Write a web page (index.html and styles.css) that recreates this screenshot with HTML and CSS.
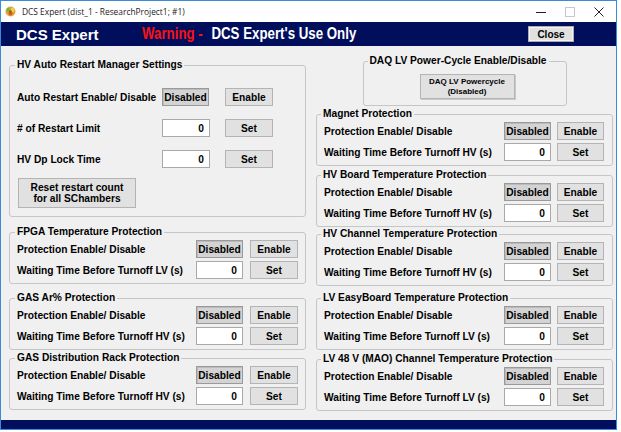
FILE: index.html
```html
<!DOCTYPE html>
<html>
<head>
<meta charset="utf-8">
<title>DCS Expert</title>
<link rel="stylesheet" href="styles.css">
</head>
<body>
<div class="window">
  <div class="titlebar">
    <svg class="app-icon" width="11" height="11" viewBox="0 0 11 11">
      <circle cx="5.5" cy="5.5" r="5" fill="#e8a33a"/>
      <circle cx="3.5" cy="4" r="2.2" fill="#7fb33c"/>
      <circle cx="7.5" cy="4" r="2" fill="#f2d14a"/>
      <circle cx="5.5" cy="7.5" r="2" fill="#d45a2a"/>
      <circle cx="5.5" cy="5.5" r="1.2" fill="#8a5a2a"/>
    </svg>
    <span class="title">DCS Expert (dist_1 - ResearchProject1; #1)</span>
    <div class="controls">
      <span class="ctl"><svg width="10" height="10" viewBox="0 0 10 10"><path d="M0 5.5H10" stroke="#222" stroke-width="1"/></svg></span>
      <span class="ctl"><svg width="10" height="10" viewBox="0 0 10 10"><rect x="0.5" y="0.5" width="9" height="9" fill="none" stroke="#c8c8c8" stroke-width="1"/></svg></span>
      <span class="ctl"><svg width="10" height="10" viewBox="0 0 10 10"><path d="M0.5 0.5L9.5 9.5M9.5 0.5L0.5 9.5" stroke="#222" stroke-width="1"/></svg></span>
    </div>
  </div>

  <div class="header">
    <span class="brand">DCS Expert</span>
    <span class="warn"><span class="red">Warning - </span>DCS Expert's Use Only</span>
    <button class="btn close-btn">Close</button>
  </div>

  <div class="content">
    <div class="col">
      <fieldset class="group hv">
        <legend>HV Auto Restart Manager Settings</legend>
        <div class="hv-row first">
          <span class="hv-label">Auto Restart Enable/ Disable</span>
          <button class="btn pressed hv-ctl narrow">Disabled</button>
          <button class="btn hv-btn">Enable</button>
        </div>
        <div class="hv-row">
          <span class="hv-label"># of Restart Limit</span>
          <input class="num hv-ctl" type="text" value="0" readonly>
          <button class="btn hv-btn">Set</button>
        </div>
        <div class="hv-row">
          <span class="hv-label">HV Dp Lock Time</span>
          <input class="num hv-ctl" type="text" value="0" readonly>
          <button class="btn hv-btn">Set</button>
        </div>
        <button class="btn reset-btn">Reset restart count<br>for all SChambers</button>
      </fieldset>

      <fieldset class="group prot l1">
        <legend>FPGA Temperature Protection</legend>
        <div class="row"><span class="label">Protection Enable/ Disable</span><button class="btn pressed">Disabled</button><button class="btn">Enable</button></div>
        <div class="row"><span class="label">Waiting Time Before Turnoff LV (s)</span><input class="num" type="text" value="0" readonly><button class="btn">Set</button></div>
      </fieldset>

      <fieldset class="group prot l2">
        <legend>GAS Ar% Protection</legend>
        <div class="row"><span class="label">Protection Enable/ Disable</span><button class="btn pressed">Disabled</button><button class="btn">Enable</button></div>
        <div class="row"><span class="label">Waiting Time Before Turnoff HV (s)</span><input class="num" type="text" value="0" readonly><button class="btn">Set</button></div>
      </fieldset>

      <fieldset class="group prot l3">
        <legend>GAS Distribution Rack Protection</legend>
        <div class="row"><span class="label">Protection Enable/ Disable</span><button class="btn pressed">Disabled</button><button class="btn">Enable</button></div>
        <div class="row"><span class="label">Waiting Time Before Turnoff HV (s)</span><input class="num" type="text" value="0" readonly><button class="btn">Set</button></div>
      </fieldset>
    </div>

    <div class="col right">
      <fieldset class="group daq">
        <legend>DAQ LV Power-Cycle Enable/Disable</legend>
        <button class="btn daq-btn">DAQ LV Powercycle<br>(Disabled)</button>
      </fieldset>

      <fieldset class="group prot r1">
        <legend>Magnet Protection</legend>
        <div class="row"><span class="label">Protection Enable/ Disable</span><button class="btn pressed">Disabled</button><button class="btn">Enable</button></div>
        <div class="row"><span class="label">Waiting Time Before Turnoff HV (s)</span><input class="num" type="text" value="0" readonly><button class="btn">Set</button></div>
      </fieldset>

      <fieldset class="group prot r2">
        <legend>HV Board Temperature Protection</legend>
        <div class="row"><span class="label">Protection Enable/ Disable</span><button class="btn pressed">Disabled</button><button class="btn">Enable</button></div>
        <div class="row"><span class="label">Waiting Time Before Turnoff HV (s)</span><input class="num" type="text" value="0" readonly><button class="btn">Set</button></div>
      </fieldset>

      <fieldset class="group prot r3">
        <legend>HV Channel Temperature Protection</legend>
        <div class="row"><span class="label">Protection Enable/ Disable</span><button class="btn pressed">Disabled</button><button class="btn">Enable</button></div>
        <div class="row"><span class="label">Waiting Time Before Turnoff HV (s)</span><input class="num" type="text" value="0" readonly><button class="btn">Set</button></div>
      </fieldset>

      <fieldset class="group prot r4">
        <legend>LV EasyBoard Temperature Protection</legend>
        <div class="row"><span class="label">Protection Enable/ Disable</span><button class="btn pressed">Disabled</button><button class="btn">Enable</button></div>
        <div class="row"><span class="label">Waiting Time Before Turnoff LV (s)</span><input class="num" type="text" value="0" readonly><button class="btn">Set</button></div>
      </fieldset>

      <fieldset class="group prot r5">
        <legend>LV 48 V (MAO) Channel Temperature Protection</legend>
        <div class="row"><span class="label">Protection Enable/ Disable</span><button class="btn pressed">Disabled</button><button class="btn">Enable</button></div>
        <div class="row"><span class="label">Waiting Time Before Turnoff LV (s)</span><input class="num" type="text" value="0" readonly><button class="btn">Set</button></div>
      </fieldset>
    </div>
  </div>

  <div class="footer"></div>
</div>
</body>
</html>
```

FILE: styles.css
```css
* { box-sizing: border-box; }

html, body {
  margin: 0;
  padding: 0;
  background: #ffffff;
}

body {
  width: 621px;
  height: 432px;
  overflow: hidden;
  font-family: "Liberation Sans", Arial, sans-serif;
}

.window {
  width: 617px;
  height: 430px;
  border: 1px solid #3a8bd8;
  display: flex;
  flex-direction: column;
  background: #f0f0f0;
}

/* title bar */
.titlebar {
  height: 21px;
  background: #ffffff;
  display: flex;
  align-items: center;
  flex: none;
}

.app-icon {
  margin-left: 4px;
  flex: none;
}

.title {
  margin-left: 6px;
  font-family: "Open Sans", "Noto Sans", sans-serif;
  font-size: 8.4px;
  color: #1a1a1a;
  white-space: nowrap;
}

.controls {
  margin-left: auto;
  margin-right: 3px;
  display: flex;
  height: 21px;
}

.ctl {
  width: 29px;
  display: flex;
  align-items: center;
  justify-content: center;
}

/* header */
.header {
  height: 24px;
  background: #000e5c;
  display: flex;
  align-items: center;
  flex: none;
  padding-left: 15px;
}

.brand {
  color: #ffffff;
  font-weight: bold;
  font-size: 15px;
  width: 126px;
  flex: none;
  white-space: nowrap;
}

.warn {
  display: inline-block;
  color: #ffffff;
  font-weight: bold;
  font-size: 16px;
  white-space: nowrap;
  transform: scaleX(0.83);
  transform-origin: left center;
  flex: none;
}

.red {
  color: #ff1010;
  margin-right: 6px;
}

.header .close-btn {
  margin: 0 42px 0 auto;
  width: 46px;
  height: 16px;
  font-size: 10px;
  flex: none;
  background: #e1e1e1;
  border: 1px solid #adadad;
  box-shadow: inset 0 0 0 1px #f4f4f4;
}

/* content */
.content {
  height: 374px;
  flex: none;
  display: grid;
  grid-template-columns: 297px 297px;
  column-gap: 10px;
  padding-left: 8px;
  align-items: start;
}

.col {
  display: flex;
  flex-direction: column;
}

.footer {
  height: 9px;
  background: #000e5c;
  flex: none;
}

/* group boxes */
.group {
  margin: 0;
  min-width: 0;
  border: 1px solid #c6c6c6;
  border-radius: 3px;
  padding: 0 7px 2px 7px;
}

.group legend {
  font-weight: bold;
  font-size: 10.2px;
  line-height: 14px;
  padding: 0 2px;
  margin-left: -2px;
  color: #000;
  white-space: nowrap;
}

.right .group legend {
  margin-left: -3px;
}

.label,
.hv-label {
  font-weight: bold;
  font-size: 10.2px;
  color: #000;
  white-space: nowrap;
}

.btn {
  font-family: "Liberation Sans", Arial, sans-serif;
  font-weight: bold;
  font-size: 10.2px;
  color: #000;
  background: #e1e1e1;
  border: 1px solid #b4b4b4;
  border-radius: 0;
  padding: 0;
  height: 18px;
  margin: 0;
}

.btn.pressed {
  background: #d3d3d3;
  border-color: #9a9a9a;
  box-shadow: inset 1px 1px 0 #bcbcbc;
}

.num {
  font-family: "Liberation Sans", Arial, sans-serif;
  font-weight: bold;
  font-size: 10.2px;
  color: #000;
  background: #ffffff;
  border: 1px solid #a9a9a9;
  height: 18px;
  width: 100%;
  text-align: right;
  padding: 0 5px 0 0;
  margin: 0;
  outline: none;
}

/* HV auto restart */
.hv {
  margin-top: 12px;
  height: 159px;
}

.hv-row {
  display: flex;
  align-items: center;
  height: 20px;
  margin-top: 11px;
}

.hv-row.first {
  margin-top: 15px;
}

.hv-label {
  width: 145px;
  flex: none;
}

.hv-ctl {
  width: 48px;
  flex: none;
}

.hv-ctl.narrow {
  width: 47px;
  margin-right: 1px;
}

.hv-btn {
  width: 48px;
  flex: none;
  margin-left: 15px;
}

.reset-btn {
  margin: 9px 0 0 1px;
  width: 118px;
  height: 30px;
  line-height: 11px;
  font-size: 10.2px;
}

/* protection groups */
.prot .row {
  display: grid;
  grid-template-columns: 1fr 47px 48px;
  column-gap: 7px;
  align-items: center;
  height: 20px;
}

.prot .row + .row {
  height: 22px;
}

.right .prot .row {
  grid-template-columns: 1fr 47px 47px;
  column-gap: 6px;
}

.right .prot {
  padding-right: 8px;
}

.l1 { margin-top: 8px; }
.l2 { margin-top: 7px; }
.l3 { margin-top: 1px; }

/* right column */
.daq {
  width: 204px;
  height: 52px;
  margin: 8px auto 0 auto;
  padding: 0;
  display: block;
}

.right .daq legend {
  margin-left: 4px;
}

.daq-btn {
  display: block;
  margin: 6px 0 0 56px;
  width: 95px;
  height: 25px;
  font-size: 8px;
  line-height: 10px;
  box-shadow: 1px 1px 0 #c9c9c9;
}

.r1 { margin-top: 1px; }
.r2 { margin-top: 2px; }
.r3 { margin-top: 0; }
.r4 { margin-top: 5px; }
.r5 { margin-top: 2px; }
```
